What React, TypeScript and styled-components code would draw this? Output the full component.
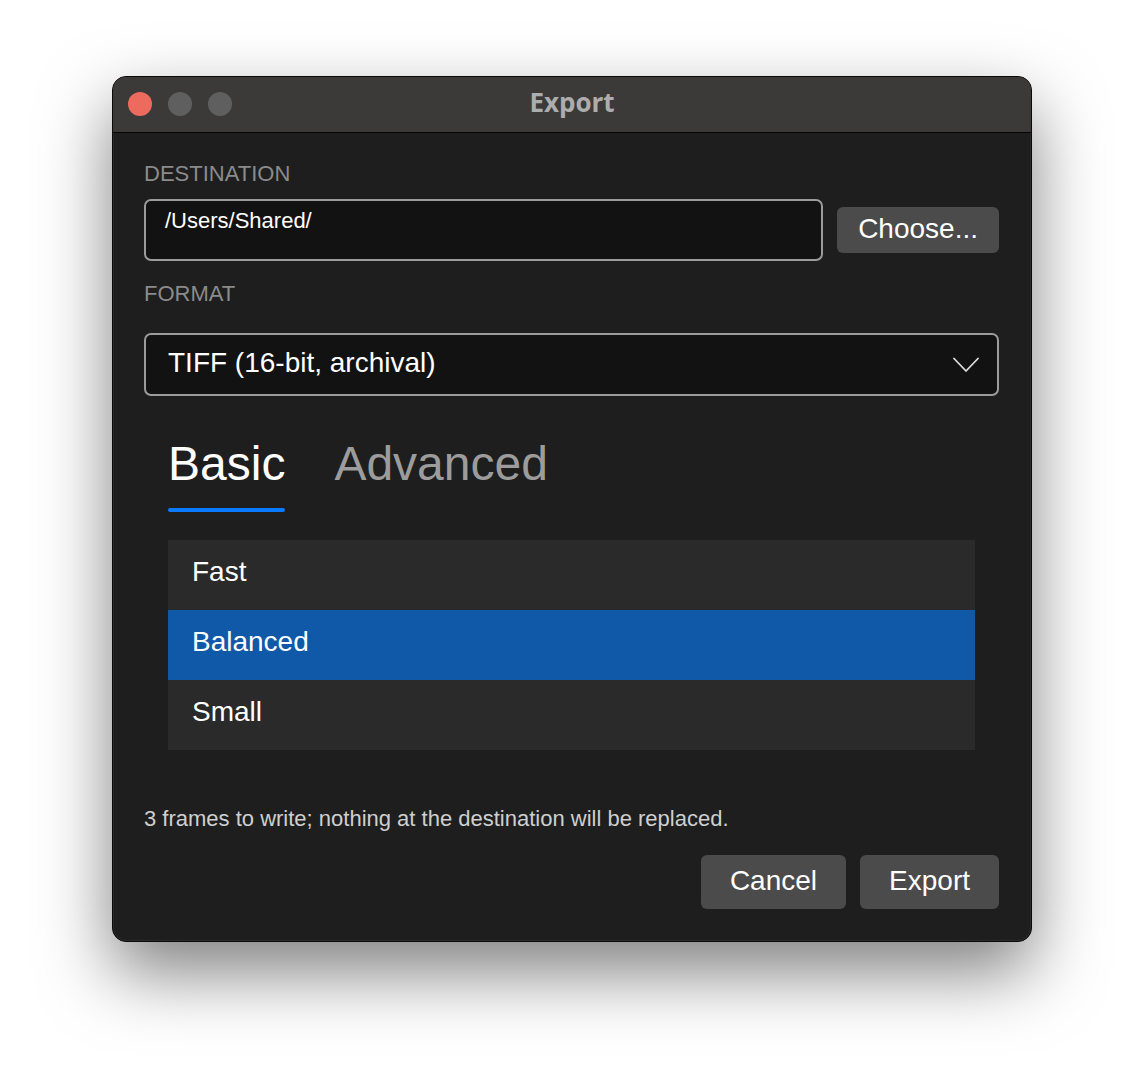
import React, { useState } from "react";
import styled, { createGlobalStyle } from "styled-components";

const Global = createGlobalStyle`
  html, body { margin: 0; padding: 0; background: #ffffff; }
  body { font-family: "Liberation Sans", Arial, sans-serif; }
  * { box-sizing: border-box; }
`;

const Page = styled.div`
  padding: 76px 0 0 112px;
  min-height: 1090px;
`;

const Window = styled.div`
  width: 920px;
  height: 866px;
  border-radius: 14px;
  background: #1e1e1e;
  border: 1px solid #0a0a0a;
  box-shadow: 0 30px 70px rgba(0, 0, 0, 0.5), 0 0 0 1px rgba(255,255,255,0.06) inset;
  overflow: hidden;
  display: flex;
  flex-direction: column;
`;

const TitleBar = styled.div`
  height: 56px;
  flex: none;
  background: #3b3a39;
  border-bottom: 1px solid #050505;
  display: flex;
  align-items: center;
  padding-left: 15px;
  padding-bottom: 2px;
  position: relative;
`;

const Lights = styled.div`
  display: flex;
  gap: 16px;
`;

const Light = styled.span<{ $c: string }>`
  width: 24px;
  height: 24px;
  border-radius: 50%;
  background: ${(p) => p.$c};
`;

const Title = styled.div`
  position: absolute;
  left: 0;
  right: 0;
  top: 8px;
  text-align: center;
  font-family: "Open Sans", sans-serif;
  font-weight: 700;
  font-size: 26px;
  line-height: 34px;
  color: #adadad;
  pointer-events: none;
`;

const Body = styled.div`
  flex: 1;
  display: flex;
  flex-direction: column;
  padding: 28px 32px 32px 31px;
`;

const Label = styled.div<{ $mt?: number }>`
  font-size: 22px;
  color: #8b8b8b;
  margin-top: ${(p) => p.$mt ?? 0}px;
`;

const DestRow = styled.div`
  display: flex;
  align-items: center;
  gap: 14px;
  margin-top: 12px;
`;

const PathField = styled.div`
  flex: 1;
  height: 62px;
  background: #121212;
  border: 2px solid #9b9b9b;
  border-radius: 7px;
  padding: 7px 19px;
  font-size: 22px;
  color: #ffffff;
`;

const Button = styled.button`
  font-family: "Liberation Sans", Arial, sans-serif;
  font-size: 28px;
  color: #ffffff;
  background: #4b4b4b;
  border: none;
  border-radius: 6px;
  padding: 0 21px;
  cursor: pointer;
`;

const ChooseButton = styled(Button)`
  height: 46px;
  padding-bottom: 2px;
`;

const Select = styled.div`
  margin-top: 26px;
  height: 63px;
  background: #121212;
  border: 2px solid #9b9b9b;
  border-radius: 7px;
  display: flex;
  align-items: center;
  justify-content: space-between;
  padding: 0 18px 4px 22px;
  font-size: 28px;
  color: #ffffff;
`;

const ChevronBox = styled.span`
  display: flex;
  padding-top: 4px;
`;

const Tabs = styled.div`
  display: flex;
  gap: 49px;
  padding: 0 24px;
  margin-top: 40px;
`;

const Tab = styled.div<{ $active?: boolean }>`
  font-size: 48px;
  color: ${(p) => (p.$active ? "#ffffff" : "#9c9c9c")};
  display: flex;
  flex-direction: column;
  gap: 17px;
  cursor: pointer;
  &::after {
    content: "";
    height: 4px;
    border-radius: 2px;
    background: ${(p) => (p.$active ? "#0a7aff" : "transparent")};
  }
`;

const List = styled.div`
  margin: 28px 24px 0;
  display: flex;
  flex-direction: column;
`;

const Row = styled.div<{ $selected?: boolean }>`
  height: 70px;
  padding: 16px 0 0 24px;
  font-size: 28px;
  color: #ffffff;
  background: ${(p) => (p.$selected ? "#1059a8" : "#2a2a2a")};
  cursor: pointer;
`;

const Note = styled.div`
  margin-top: 56px;
  font-size: 22px;
  color: #cfcfcf;
`;

const Actions = styled.div`
  margin-top: 23px;
  display: flex;
  justify-content: flex-end;
  gap: 14px;
`;

const ActionButton = styled(Button)`
  height: 54px;
  padding: 0 29px 3px;
`;

const Chevron = () => (
  <svg width="26" height="16" viewBox="0 0 26 16" fill="none">
    <polyline points="1,1.5 13,14 25,1.5" stroke="#dcdcdc" strokeWidth="1.8" strokeLinecap="round" strokeLinejoin="round" />
  </svg>
);

export default function App() {
  const [sel, setSel] = useState("Balanced");
  const [tab, setTab] = useState("Basic");
  return (
    <Page>
      <Global />
      <Window>
        <TitleBar>
          <Lights>
            <Light $c="#ec6a5e" />
            <Light $c="#5f5f5f" />
            <Light $c="#5f5f5f" />
          </Lights>
          <Title>Export</Title>
        </TitleBar>
        <Body>
          <Label>DESTINATION</Label>
          <DestRow>
            <PathField>/Users/Shared/</PathField>
            <ChooseButton>Choose...</ChooseButton>
          </DestRow>
          <Label $mt={20}>FORMAT</Label>
          <Select>
            <span>TIFF (16-bit, archival)</span>
            <ChevronBox>
              <Chevron />
            </ChevronBox>
          </Select>
          <Tabs>
            {["Basic", "Advanced"].map((t) => (
              <Tab key={t} $active={tab === t} onClick={() => setTab(t)}>
                {t}
              </Tab>
            ))}
          </Tabs>
          <List>
            {["Fast", "Balanced", "Small"].map((r) => (
              <Row key={r} $selected={sel === r} onClick={() => setSel(r)}>
                {r}
              </Row>
            ))}
          </List>
          <Note>3 frames to write; nothing at the destination will be replaced.</Note>
          <Actions>
            <ActionButton>Cancel</ActionButton>
            <ActionButton>Export</ActionButton>
          </Actions>
        </Body>
      </Window>
    </Page>
  );
}
